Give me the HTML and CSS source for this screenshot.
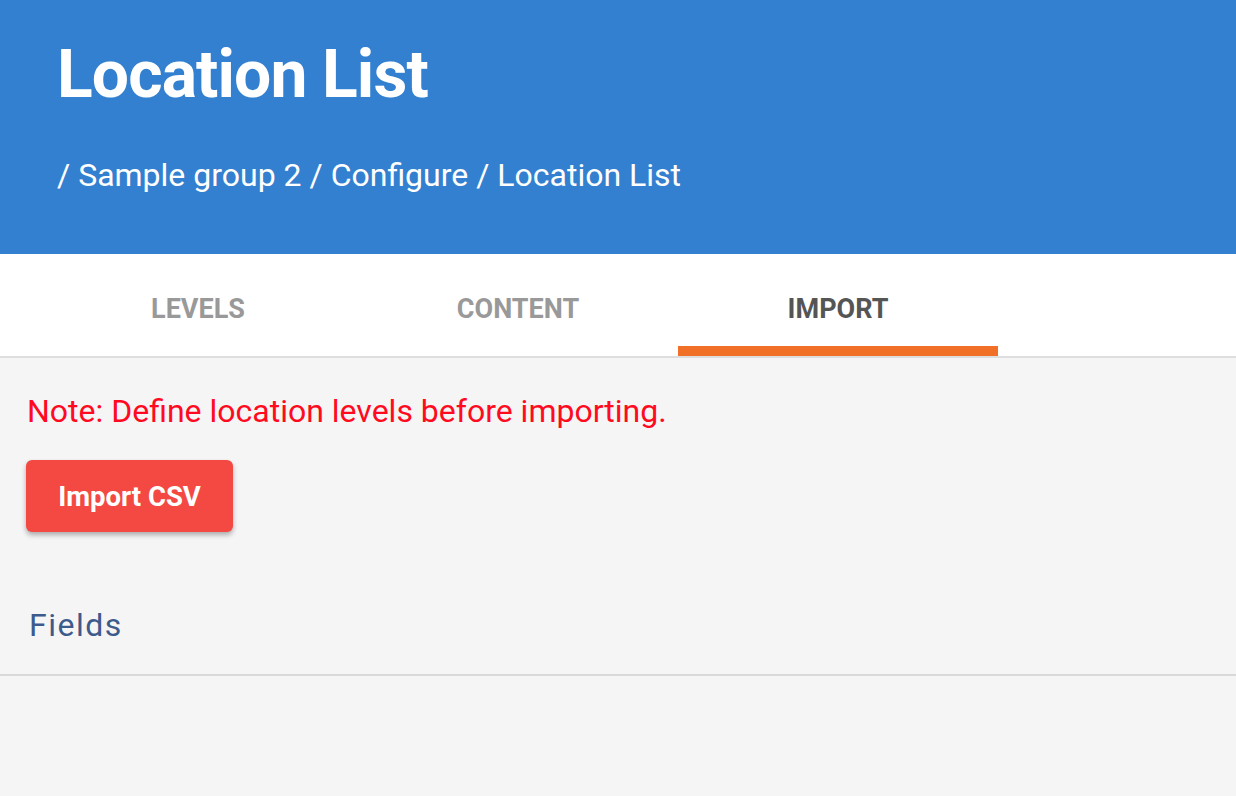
FILE: index.html
```html
<!DOCTYPE html>
<html lang="en">
<head>
<meta charset="utf-8">
<title>Location List</title>
<link rel="stylesheet" href="styles.css">
</head>
<body>
<header class="page-header">
  <h1 class="page-title">Location List</h1>
  <div class="breadcrumb">/ Sample group 2 / Configure / Location List</div>
</header>
<nav class="tabs">
  <div class="tab">LEVELS</div>
  <div class="tab">CONTENT</div>
  <div class="tab tab-active">IMPORT</div>
</nav>
<main class="content">
  <p class="note">Note: Define location levels before importing.</p>
  <button class="btn-import">Import CSV</button>
  <h2 class="fields-title">Fields</h2>
  <div class="divider"></div>
</main>
</body>
</html>
```
FILE: styles.css
```css
* { box-sizing: border-box; }
html, body {
  margin: 0;
  padding: 0;
  background: #f5f5f5;
  font-family: Roboto, "Liberation Sans", Arial, sans-serif;
}
.page-header {
  background: #3380d0;
  height: 254px;
  padding: 0 0 0 57px;
  color: #fff;
  display: flex;
  flex-direction: column;
}
.page-title {
  margin: 0;
  padding-top: 36px;
  font-size: 66px;
  font-weight: 700;
  line-height: 78px;
  letter-spacing: -0.9px;
}
.breadcrumb {
  margin-top: 41px;
  font-size: 32px;
  line-height: 40px;
}
.tabs {
  display: flex;
  background: #fff;
  height: 104px;
  border-bottom: 2px solid #dedede;
  padding-left: 38px;
}
.tab {
  width: 320px;
  height: 102px;
  padding-top: 39px;
  text-align: center;
  font-size: 27px;
  line-height: 32px;
  font-weight: 700;
  color: #999;
}
.tab-active {
  color: #555;
  border-bottom: 10px solid #ef7026;
}
.content {
  padding: 0;
}
.note {
  margin: 0;
  padding: 33px 0 0 27px;
  color: #ff0a1e;
  font-size: 32px;
  line-height: 40px;
}
.btn-import {
  display: block;
  margin: 29px 0 0 26px;
  width: 207px;
  height: 72px;
  border: none;
  border-radius: 6px;
  background: #f44842;
  color: #fff;
  font-family: Roboto, "Liberation Sans", Arial, sans-serif;
  font-size: 27.5px;
  font-weight: 700;
  box-shadow: 0 3px 5px rgba(0,0,0,0.3);
}
.fields-title {
  margin: 0;
  padding: 73px 0 0 29px;
  font-size: 32px;
  font-weight: 400;
  letter-spacing: 1.5px;
  color: #3d5a8c;
  line-height: 40px;
}
.divider {
  margin-top: 29px;
  height: 2px;
  background: #d9d9d9;
}
```
